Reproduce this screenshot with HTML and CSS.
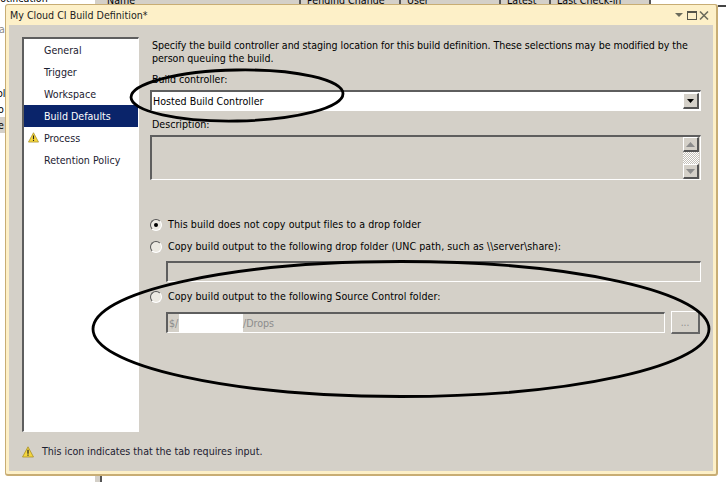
FILE: index.html
```html
<!DOCTYPE html>
<html lang="en">
<head>
<meta charset="utf-8">
<title>My Cloud CI Build Definition</title>
<link rel="stylesheet" href="styles.css">
</head>
<body>
<div class="desktop">
  <div class="bg-head">
    <div class="bg-notif">Notification</div>
    <div class="bg-col w200">Name</div>
    <div class="bg-col w100">Pending Change</div>
    <div class="bg-col w100">User</div>
    <div class="bg-col w50">Latest</div>
    <div class="bg-col w100">Last Check-in</div>
  </div>
  <div class="bg-frag f1">a</div>
  <div class="bg-frag f2">ol</div>
  <div class="bg-frag f3">o</div>
  <div class="bg-frag f4">e</div>
  <div class="bg-foot"></div>
  <div class="bg-corner"></div>

  <div class="window">
    <div class="titlebar">
      <span class="title">My Cloud CI Build Definition*</span>
      <span class="controls">
        <svg width="36" height="12" viewBox="0 0 36 12"><path d="M0 4h8l-4 4z" fill="#6b6b5c"/><rect x="12.5" y="2.5" width="9" height="8" fill="none" stroke="#55554a"/><rect x="12" y="2" width="10" height="2" fill="#55554a"/><path d="M25 2.5l8 8M33 2.5l-8 8" stroke="#6b6b5c" stroke-width="1.6" fill="none"/></svg>
      </span>
    </div>
    <div class="body">
      <div class="main">
        <ul class="nav">
          <li class="nav-item">General</li>
          <li class="nav-item">Trigger</li>
          <li class="nav-item">Workspace</li>
          <li class="nav-item active">Build Defaults</li>
          <li class="nav-item"><svg class="warn nav-warn" width="11" height="11" viewBox="0 0 12 12"><path d="M6 .8L11.5 11H.5z" fill="#f5d63c" stroke="#a89028" stroke-width=".8"/><path d="M5.4 3.8h1.2v4H5.4zM5.4 8.6h1.2v1.2H5.4z" fill="#222"/></svg>Process</li>
          <li class="nav-item">Retention Policy</li>
        </ul>
        <div class="panel">
          <p class="intro">Specify the build controller and staging location for this build definition. These selections may be modified by the person queuing the build.</p>
          <div class="label l-build">Build controller:</div>
          <div class="field combo">
            <span class="combo-value">Hosted Build Controller</span>
            <span class="combo-btn"><svg width="7" height="4" viewBox="0 0 7 4"><path d="M0 0h7L3.5 4z" fill="#000"/></svg></span>
          </div>
          <div class="label l-desc">Description:</div>
          <div class="field desc">
            <div class="scroll">
              <span class="sbtn"><svg width="9" height="5" viewBox="0 0 9 5"><path d="M4.5 0L9 5H0z" fill="#8c8c8c"/></svg></span>
              <span class="strack"></span>
              <span class="sbtn"><svg width="9" height="5" viewBox="0 0 9 5"><path d="M0 0h9L4.5 5z" fill="#8c8c8c"/></svg></span>
            </div>
          </div>
          <div class="option o1"><span class="radio checked"></span>This build does not copy output files to a drop folder</div>
          <div class="option o2"><span class="radio"></span>Copy build output to the following drop folder (UNC path, such as \\server\share):</div>
          <div class="field path"></div>
          <div class="option o3"><span class="radio"></span>Copy build output to the following Source Control folder:</div>
          <div class="path-row">
            <div class="field source"><span class="src-root">$/</span><span class="redact"></span><span>/Drops</span></div>
            <span class="browse">...</span>
          </div>
        </div>
      </div>
      <div class="footer"><svg class="warn" width="12" height="12" viewBox="0 0 12 12"><path d="M6 .8L11.5 11H.5z" fill="#f5d63c" stroke="#a89028" stroke-width=".8"/><path d="M5.4 3.8h1.2v4H5.4zM5.4 8.6h1.2v1.2H5.4z" fill="#222"/></svg>This icon indicates that the tab requires input.</div>
    </div>
  </div>

  <svg class="marks" width="726" height="482" viewBox="0 0 726 482">
    <ellipse cx="237" cy="95.5" rx="106" ry="25.5" transform="rotate(-1 237 95.5)" fill="none" stroke="#000" stroke-width="2.8"/>
    <ellipse cx="401" cy="329" rx="308" ry="67.5" fill="none" stroke="#000" stroke-width="2.8"/>
  </svg>
</div>
</body>
</html>
```
FILE: styles.css
```css
* { box-sizing: border-box; }
html, body { margin: 0; padding: 0; }
body { background: #fff; font-family: "DejaVu Sans Condensed", "DejaVu Sans", sans-serif; font-stretch: condensed; font-size: 10.6px; color: #000; }
.desktop { position: relative; width: 726px; height: 482px; overflow: hidden; background: #fff; }

.bg-head { display: flex; height: 5px; overflow: hidden; align-items: flex-start; }
.bg-notif { flex: none; width: 95px; height: 5px; line-height: 1px; white-space: nowrap; text-indent: -7px; margin-top: -2px; }
.bg-col { flex: none; white-space: nowrap; height: 5px; line-height: 1px; padding-left: 6px; background: #d4d0c8; border-right: 2px solid #555; }
.w200 { width: 206px; border-left: 6px solid #d4d0c8; }
.w100 { width: 100px; }
.w50 { width: 50px; }
.bg-frag { position: absolute; left: 0; line-height: 13px; }
.f1 { top: 23px; left: -1px; color: #8a8a8a; }
.f2 { top: 87px; left: -3px; }
.f3 { top: 103px; left: -2px; }
.f4 { top: 117px; width: 5px; height: 16px; line-height: 16px; overflow: hidden; text-indent: -2px; background: #d4d0c8; }
.bg-foot { position: absolute; left: 95px; bottom: 0; width: 7px; height: 8px; background: #d4d0c8; border-right: 2px solid #555; }
.bg-corner { position: absolute; right: 0; top: 5px; width: 8px; height: 2px; background: #444; }

.window { position: absolute; left: 5px; top: 4px; width: 713px; height: 472px; display: flex; flex-direction: column; background: #fdf0c8; border: 1px solid #c8ad74; border-right-width: 2px; border-bottom-width: 2px; border-radius: 3px; padding: 0 3px 3px 3px; }
.titlebar { height: 20px; flex: none; display: flex; align-items: center; justify-content: space-between; padding-left: 1px; padding-right: 2px; }
.title { color: #1c1c1c; }
.controls { display: flex; }
.body { flex: 1; background: #d4d0c8; display: flex; flex-direction: column; padding: 12px 13px 0 13px; }
.main { display: flex; height: 395px; flex: none; }

.nav { list-style: none; margin: 0; padding: 0; width: 117px; flex: none; background: #fff; border: 1px solid #fff; border-top: 2px solid #5e5e5e; border-left: 2px solid #5e5e5e; }
.nav-item { height: 22px; line-height: 22px; padding-left: 20px; position: relative; color: #1c2030; }
.nav-item.active { background: #0a246a; color: #fff; }
.nav-warn { position: absolute; left: 4px; top: 5px; }

.panel { flex: 1; padding: 2px 0 0 11px; min-width: 0; }
.intro { margin: 0; width: 548px; padding-left: 2px; line-height: 13px; letter-spacing: -0.05px; }
.label { line-height: 13px; padding-left: 2px; }
.l-build { margin-top: 8px; }
.l-desc { margin-top: 7px; }
.field { border: 1px solid #fff; border-top: 2px solid #5e5e5e; border-left: 2px solid #5e5e5e; }
.combo { margin-top: 4px; width: 551px; height: 21px; background: #fff; display: flex; align-items: center; justify-content: space-between; padding-right: 1px; }
.combo-value { padding-left: 1px; }
.combo-btn { width: 16px; height: 16px; background: #d4d0c8; border: 1px solid #fff; border-right: 2px solid #555; border-bottom: 2px solid #555; display: flex; align-items: center; justify-content: center; }
.desc { margin-top: 4px; width: 551px; height: 45px; display: flex; justify-content: flex-end; }
.scroll { display: flex; flex-direction: column; width: 16px; margin-right: 1px; }
.sbtn { width: 16px; height: 15px; flex: none; background: #d4d0c8; border: 1px solid #fff; border-right: 2px solid #555; border-bottom: 2px solid #555; display: flex; align-items: center; justify-content: center; }
.strack { flex: 1; background: repeating-conic-gradient(#fff 0 25%, #c4c0b8 0 50%) 0 0 / 2px 2px; }
.option { display: flex; align-items: center; height: 13px; line-height: 13px; letter-spacing: 0.06px; }
.o1 { margin-top: 38px; }
.o2 { margin-top: 9px; }
.o3 { margin-top: 8px; }
.radio { width: 12px; height: 12px; border-radius: 50%; flex: none; margin-right: 6px; border: 1px solid; border-color: #555 #fff #fff #555; background: #ece9e2; position: relative; }
.radio.checked::after { content: ""; position: absolute; left: 3px; top: 3px; width: 4px; height: 4px; border-radius: 50%; background: #000; }
.path { margin: 8px 0 0 16px; width: 535px; height: 21px; }
.path-row { display: flex; margin: 8px 0 0 16px; gap: 6px; align-items: center; }
.source { width: 500px; height: 21px; display: flex; align-items: center; color: #8c8c8c; padding-left: 1px; }
.src-root { width: 10px; flex: none; }
.redact { width: 64px; height: 19px; background: #fff; }
.browse { width: 29px; height: 23px; background: #d4d0c8; border: 1px solid #fff; border-right: 2px solid #666; border-bottom: 2px solid #666; display: flex; align-items: center; justify-content: center; color: #8c8c8c; font-size: 10px; }
.footer { display: flex; align-items: center; gap: 8px; margin-top: 13px; line-height: 13px; color: #1c2030; }
.marks { position: absolute; left: 0; top: 0; pointer-events: none; }
```
